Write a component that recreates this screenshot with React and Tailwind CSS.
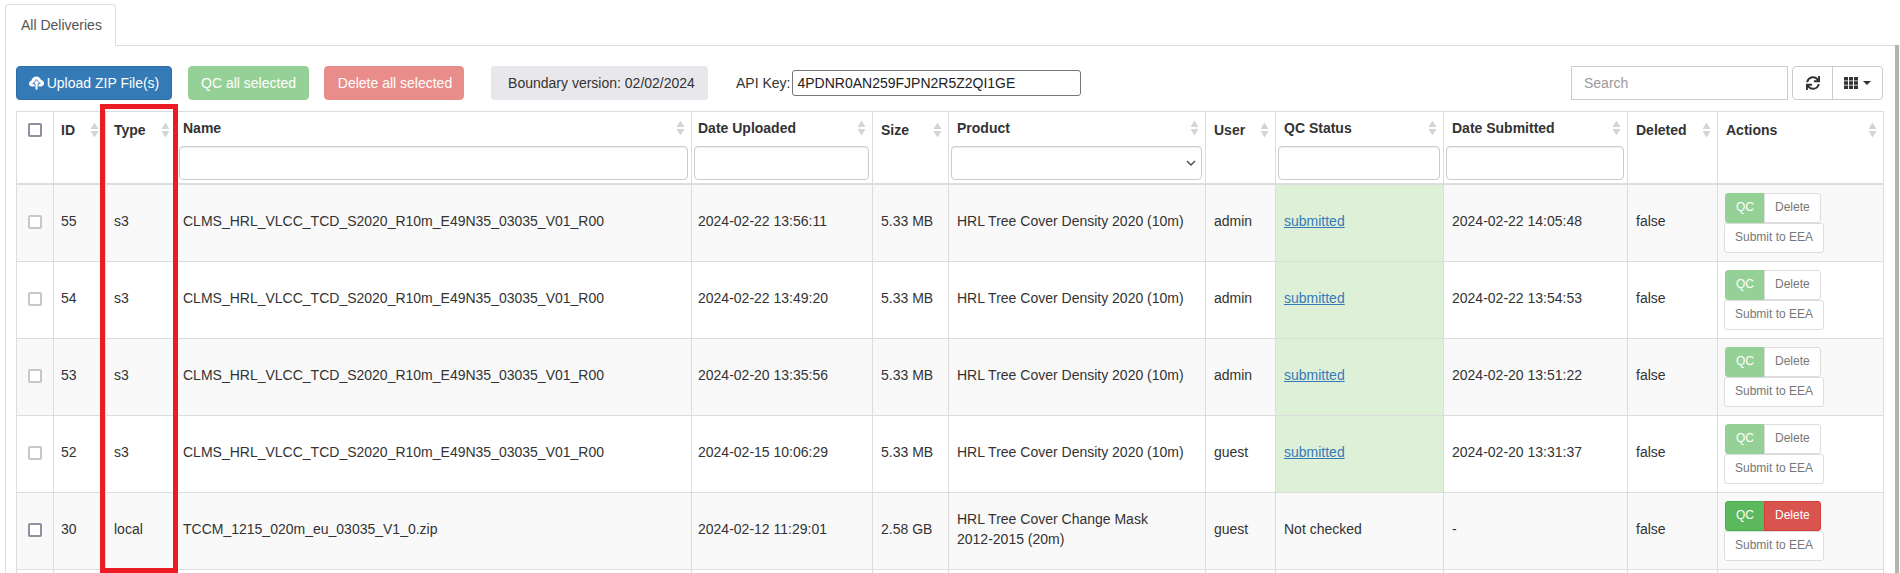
import React from "react";
import { FaSync } from "react-icons/fa";

const rows = [
  { id: 55, type: "s3", name: "CLMS_HRL_VLCC_TCD_S2020_R10m_E49N35_03035_V01_R00", up: "2024-02-22 13:56:11", size: "5.33 MB", product: "HRL Tree Cover Density 2020 (10m)", user: "admin", sub: "2024-02-22 14:05:48", done: true },
  { id: 54, type: "s3", name: "CLMS_HRL_VLCC_TCD_S2020_R10m_E49N35_03035_V01_R00", up: "2024-02-22 13:49:20", size: "5.33 MB", product: "HRL Tree Cover Density 2020 (10m)", user: "admin", sub: "2024-02-22 13:54:53", done: true },
  { id: 53, type: "s3", name: "CLMS_HRL_VLCC_TCD_S2020_R10m_E49N35_03035_V01_R00", up: "2024-02-20 13:35:56", size: "5.33 MB", product: "HRL Tree Cover Density 2020 (10m)", user: "admin", sub: "2024-02-20 13:51:22", done: true },
  { id: 52, type: "s3", name: "CLMS_HRL_VLCC_TCD_S2020_R10m_E49N35_03035_V01_R00", up: "2024-02-15 10:06:29", size: "5.33 MB", product: "HRL Tree Cover Density 2020 (10m)", user: "guest", sub: "2024-02-20 13:31:37", done: true },
  { id: 30, type: "local", name: "TCCM_1215_020m_eu_03035_V1_0.zip", up: "2024-02-12 11:29:01", size: "2.58 GB", product: "mask", user: "guest", sub: "-", done: false },
];

const widths = [37, 52, 71, 515, 181, 76, 257, 70, 168, 184, 90, 166];

const PAD = { narrow: "pl-[6px]", mid: "pl-[7px]", wide: "pl-2" };

function Sort() {
  return (
    <svg width="9" height="16" viewBox="0 0 9 16" className="shrink-0" aria-hidden="true">
      <path d="M4.5 0.5 L8.5 7 H0.5 Z" fill="#d4d4d4" />
      <path d="M4.5 15.5 L8.5 9 H0.5 Z" fill="#d4d4d4" />
    </svg>
  );
}

function Head({ label, filter, pad = "wide" }) {
  return (
    <th className="border border-[#ddd] border-b-2 p-0 align-top text-left font-bold">
      <div className={`flex items-center justify-between pr-[6px] ${PAD[pad]} ${filter ? "h-[32px]" : "h-[36px]"}`}>
        <span>{label}</span>
        <Sort />
      </div>
      {filter === "text" && (
        <input className="mx-[2px] mt-[2px] block h-[34px] w-[calc(100%-5px)] rounded border border-[#ccc] bg-white shadow-[inset_0_1px_1px_rgba(0,0,0,0.075)] outline-none" />
      )}
      {filter === "select" && (
        <div className="relative mx-[2px] mt-[2px] flex h-[34px] w-[calc(100%-5px)] items-center justify-end rounded border border-[#ccc] bg-white pr-[5px] shadow-[inset_0_1px_1px_rgba(0,0,0,0.075)]">
          <svg width="10" height="6" viewBox="0 0 10 6" aria-hidden="true">
            <path d="M1 1 L5 5 L9 1" fill="none" stroke="#444" strokeWidth="1.3" />
          </svg>
        </div>
      )}
    </th>
  );
}

function CloudUpload() {
  return (
    <svg width="15" height="14" viewBox="0 0 15 14" aria-hidden="true">
      <path d="M3.2 10.5 C1.3 10.5 0 9.2 0 7.5 C0 6 1 4.9 2.4 4.7 C2.8 2.4 4.8 0.6 7.3 0.6 C9.5 0.6 11.4 2 12 4 C13.7 4.2 15 5.6 15 7.3 C15 9.1 13.6 10.5 11.8 10.5 Z" fill="#fff" />
      <path d="M7.5 3.6 L11.2 7.8 H9 V14 H6 V7.8 H3.8 Z" fill="#fff" stroke="#337ab7" strokeWidth="0.9" />
    </svg>
  );
}

function Actions({ active }) {
  return (
    <div className="text-xs leading-[18px]">
      <div className="flex">
        <span className={`rounded-l-[3px] border px-[10px] pb-[6px] pt-[4px] text-white ${active ? "border-[#4cae4c] bg-[#5cb85c]" : "border-[#95d196] bg-[#95d196]"}`}>QC</span>
        <span className={`-ml-px rounded-r-[3px] border px-[10px] pb-[6px] pt-[4px] ${active ? "border-[#d43f3a] bg-[#d9534f] text-white" : "border-[#ddd] bg-white text-[#777]"}`}>Delete</span>
      </div>
      <span className="-ml-px inline-block rounded-[3px] border border-[#ddd] bg-white px-[10px] pb-[6px] pt-[4px] text-[#777]">Submit to EEA</span>
    </div>
  );
}

const Cell = ({ children, pad = "wide", className = "" }) => (
  <td className={`border border-[#ddd] pb-3 pr-2 pt-2 align-middle ${PAD[pad]} ${className}`}>{children}</td>
);

export default function App() {
  return (
    <div className="relative h-[573px] w-[1900px] overflow-hidden bg-white pl-[5px] pt-1 font-['Liberation_Sans',Arial,sans-serif] text-sm leading-5 text-[#333]">
      <div className="relative z-10 -mb-px w-[111px] whitespace-nowrap rounded-t border border-[#ddd] border-b-white bg-white px-[15px] py-[10px] text-[#555]">All Deliveries</div>
      <div className="h-[600px] w-[1893px] border border-r-0 border-[#ddd] pl-[10px] pt-5">
        <div className="flex h-[34px] w-[1867px] items-center">
          <button className="flex h-[34px] w-[156px] items-center justify-center gap-[3px] rounded border border-[#2e6da4] bg-[#337ab7] text-white">
            <CloudUpload />
            <span>Upload ZIP File(s)</span>
          </button>
          <button className="ml-4 h-[34px] w-[121px] rounded border border-[#95d196] bg-[#95d196] text-white">QC all selected</button>
          <button className="ml-[15px] h-[34px] w-[140px] rounded border border-[#e88d8a] bg-[#e88d8a] pl-[2px] text-white">Delete all selected</button>
          <div className="ml-[27px] flex h-[34px] w-[217px] items-center justify-center rounded bg-[#e8e8ec] pl-[4px]">Boundary version: 02/02/2024</div>
          <span className="ml-[28px]">API Key:</span>
          <input readOnly value="4PDNR0AN259FJPN2R5Z2QI1GE" className="ml-[2px] h-[26px] w-[289px] rounded-[3px] border border-[#767676] px-[4px] text-[#222] outline-none" />
          <input placeholder="Search" className="ml-auto h-[34px] w-[217px] border border-[#ccc] px-3 outline-none placeholder:text-[#999]" />
          <div className="ml-[4px] flex h-[34px] w-[91px] rounded border border-[#ccc]">
            <div className="flex w-[40px] items-center justify-center border-r border-[#ccc]">
              <FaSync size={14} color="#333" />
            </div>
            <div className="flex flex-1 items-center justify-center gap-[5px]">
              <svg width="14" height="14" viewBox="0 0 14 14" aria-hidden="true">
                <path d="M0 1h4v3.4H0zM5 1h4v3.4H5zM10 1h4v3.4h-4zM0 5.3h4v3.4H0zM5 5.3h4v3.4H5zM10 5.3h4v3.4h-4zM0 9.6h4V13H0zM5 9.6h4V13H5zM10 9.6h4V13h-4z" fill="#333" />
              </svg>
              <span className="h-0 w-0 border-x-4 border-t-4 border-x-transparent border-t-[#333]" />
            </div>
          </div>
        </div>

        <table className="mt-[11px] w-[1867px] table-fixed border-collapse">
          <colgroup>
            {widths.map((w, i) => (
              <col key={i} style={{ width: w }} />
            ))}
          </colgroup>
          <thead>
            <tr className="h-[72px]">
              <th className="border border-[#ddd] border-b-2 p-0 align-top">
                <div className="flex h-[36px] items-center justify-center">
                  <input type="checkbox" className="m-0 block size-[14px] appearance-none rounded-[2px] border-2 border-[#8f8f9d] bg-white" />
                </div>
              </th>
              <Head label="ID" pad="mid" />
              <Head label="Type" />
              <Head label="Name" filter="text" pad="narrow" />
              <Head label="Date Uploaded" filter="text" pad="narrow" />
              <Head label="Size" />
              <Head label="Product" filter="select" />
              <Head label="User" />
              <Head label="QC Status" filter="text" />
              <Head label="Date Submitted" filter="text" />
              <Head label="Deleted" />
              <Head label="Actions" />
            </tr>
          </thead>
          <tbody>
            {rows.map((r, i) => (
              <tr key={r.id} className={`h-[77px] ${i % 2 === 0 ? "bg-[#f9f9f9]" : "bg-white"}`}>
                <td className="border border-[#ddd] pb-3 pt-2 text-center align-middle">
                  <input
                    type="checkbox"
                    disabled={r.done}
                    className={`m-0 inline-block size-[14px] appearance-none rounded-[2px] border-2 bg-white align-middle ${r.done ? "border-[#c6c6cc]" : "border-[#8f8f9d]"}`}
                  />
                </td>
                <Cell pad="mid">{r.id}</Cell>
                <Cell>{r.type}</Cell>
                <Cell pad="narrow">{r.name}</Cell>
                <Cell pad="narrow">{r.up}</Cell>
                <Cell>{r.size}</Cell>
                <Cell>
                  {r.product === "mask" ? (
                    <>
                      HRL Tree Cover Change Mask <span className="whitespace-nowrap">2012-2015 (20m)</span>
                    </>
                  ) : (
                    r.product
                  )}
                </Cell>
                <Cell>{r.user}</Cell>
                <Cell className={r.done ? "bg-[#dff0d8]" : ""}>
                  {r.done ? <a className="text-[#337ab7] underline">submitted</a> : "Not checked"}
                </Cell>
                <Cell>{r.sub}</Cell>
                <Cell>false</Cell>
                <td className="border border-[#ddd] py-2 pl-[7px] pr-2 align-middle">
                  <Actions active={!r.done} />
                </td>
              </tr>
            ))}
            <tr className="h-[77px] bg-white">
              {widths.map((w, i) => (
                <td key={i} className="border border-[#ddd]" />
              ))}
            </tr>
          </tbody>
        </table>
      </div>
      <div className="absolute left-[100px] top-[104px] h-[469px] w-[78px] border-[5px] border-[#ed1c24]" />
      <div className="absolute right-px top-[45px] h-[528px] w-1 bg-[#b3b3b3]" />
    </div>
  );
}
